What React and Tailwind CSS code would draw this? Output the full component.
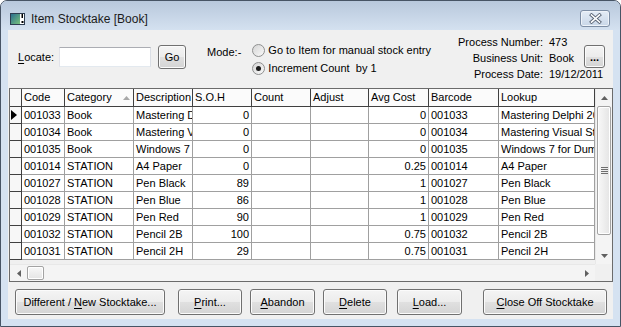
import React from 'react';

const cols = [
  { label: 'Code', w: 'w-[43px]' },
  { label: 'Category', w: 'w-[69px]', sort: true },
  { label: 'Description', w: 'w-[59px]' },
  { label: 'S.O.H', w: 'w-[59px]', right: true },
  { label: 'Count', w: 'w-[59px]' },
  { label: 'Adjust', w: 'w-[58px]' },
  { label: 'Avg Cost', w: 'w-[60px]', right: true },
  { label: 'Barcode', w: 'w-[70px]' },
  { label: 'Lookup', w: 'w-[96px]' },
];

const rows = [
  ['001033', 'Book', 'Mastering Delphi 2005', '0', '', '', '0', '001033', 'Mastering Delphi 2005'],
  ['001034', 'Book', 'Mastering Visual Studio', '0', '', '', '0', '001034', 'Mastering Visual Studio'],
  ['001035', 'Book', 'Windows 7 for Dummies', '0', '', '', '0', '001035', 'Windows 7 for Dummies'],
  ['001014', 'STATION', 'A4 Paper', '0', '', '', '0.25', '001014', 'A4 Paper'],
  ['001027', 'STATION', 'Pen Black', '89', '', '', '1', '001027', 'Pen Black'],
  ['001028', 'STATION', 'Pen Blue', '86', '', '', '1', '001028', 'Pen Blue'],
  ['001029', 'STATION', 'Pen Red', '90', '', '', '1', '001029', 'Pen Red'],
  ['001032', 'STATION', 'Pencil 2B', '100', '', '', '0.75', '001032', 'Pencil 2B'],
  ['001031', 'STATION', 'Pencil 2H', '29', '', '', '0.75', '001031', 'Pencil 2H'],
];

function U({ children }) {
  return <span className="underline underline-offset-[2px] decoration-1">{children}</span>;
}

function Btn({ className = '', children }) {
  return (
    <div
      className={`h-full shrink-0 flex items-center justify-center rounded-[3px] border border-[#707070] bg-[linear-gradient(to_bottom,#f4f4f4_0%,#ececec_50%,#e0e0e0_51%,#d4d4d4_100%)] shadow-[inset_0_0_0_1px_#fbfbfb] whitespace-pre ${className}`}
    >
      {children}
    </div>
  );
}

function Radio({ checked }) {
  return (
    <div className="w-[13px] h-[13px] shrink-0 rounded-full border border-[#8e8f8f] bg-[linear-gradient(135deg,#d4d4d4,#fafafa)] flex items-center justify-center">
      {checked && <div className="w-[5px] h-[5px] rounded-full bg-[#1a1a1a]" />}
    </div>
  );
}

function Arrow({ dir }) {
  const d = {
    up: 'M0 4 L3.5 0 L7 4 Z',
    down: 'M0 0 L3.5 4 L7 0 Z',
  };
  if (dir === 'left' || dir === 'right') {
    return (
      <svg width="4" height="7" viewBox="0 0 4 7">
        <path d={dir === 'left' ? 'M4 0 L0 3.5 L4 7 Z' : 'M0 0 L4 3.5 L0 7 Z'} fill="#606060" />
      </svg>
    );
  }
  return (
    <svg width="7" height="4" viewBox="0 0 7 4">
      <path d={d[dir]} fill="#606060" />
    </svg>
  );
}

function VScroll() {
  return (
    <div className="w-[17px] shrink-0 flex flex-col bg-[#f4f4f4] border-l border-[#e8e8e8]">
      <div className="h-[17px] shrink-0 flex items-center justify-center">
        <Arrow dir="up" />
      </div>
      <div className="h-[129px] shrink-0 mx-[1px] rounded-[2px] border border-[#a3a3a3] bg-[linear-gradient(to_right,#f8f8f8,#e4e4e4)] shadow-[inset_0_0_0_1px_#ffffff] flex items-center justify-center">
        <svg width="7" height="8" viewBox="0 0 7 8">
          <path d="M0 0.5 H7 M0 2.5 H7 M0 4.5 H7 M0 6.5 H7" stroke="#6e6e6e" strokeWidth="1" />
        </svg>
      </div>
      <div className="flex-1" />
      <div className="h-[17px] shrink-0 flex items-center justify-center">
        <Arrow dir="down" />
      </div>
    </div>
  );
}

function HScroll() {
  return (
    <div className="h-[17px] shrink-0 flex">
      <div className="flex-1 flex bg-[#f4f4f4] border-t border-[#e8e8e8]">
        <div className="w-[17px] shrink-0 flex items-center justify-center">
          <Arrow dir="left" />
        </div>
        <div className="w-[17px] shrink-0 my-[1px] rounded-[2px] border border-[#a3a3a3] bg-[linear-gradient(to_bottom,#f8f8f8,#e4e4e4)] shadow-[inset_0_0_0_1px_#ffffff]" />
        <div className="flex-1" />
        <div className="w-[17px] shrink-0 flex items-center justify-center">
          <Arrow dir="right" />
        </div>
      </div>
      <div className="w-[17px] shrink-0 bg-[#f0f0f0]" />
    </div>
  );
}

function Grid() {
  return (
    <div className="ml-[1px] w-[604px] h-[194px] shrink-0 border border-[#6b6b6b] bg-[#f0f0f0] flex flex-col">
      <div className="flex-1 flex min-h-0">
        <div className="flex-1 flex flex-col">
          <div className="flex h-[18px] shrink-0">
            <div className="w-[12px] shrink-0 bg-[#f7f7f7] border-r border-b border-[#404040]" />
            {cols.map((c) => (
              <div
                key={c.label}
                className={`${c.w} shrink-0 bg-[#fbfbfb] border-r border-b border-[#404040] pl-[2px] leading-[17px] whitespace-nowrap overflow-hidden flex items-center`}
              >
                <span>{c.label}</span>
                {c.sort && (
                  <svg className="ml-auto mr-[3px]" width="7" height="4" viewBox="0 0 7 4">
                    <path d="M0 4 L3.5 0 L7 4 Z" fill="#a8a8a8" />
                  </svg>
                )}
              </div>
            ))}
          </div>
          {rows.map((r, i) => (
            <div key={i} className="flex h-[17px] shrink-0">
              <div className="w-[12px] shrink-0 bg-[#f7f7f7] border-r border-b border-[#404040] flex items-center pl-[1px]">
                {i === 0 && (
                  <svg width="6" height="10" viewBox="0 0 6 10">
                    <path d="M0 0 L6 5 L0 10 Z" fill="#000" />
                  </svg>
                )}
              </div>
              {cols.map((c, j) => (
                <div
                  key={j}
                  className={`${c.w} shrink-0 bg-white border-r border-b border-[#a0a0a0] px-[2px] leading-[16px] whitespace-nowrap overflow-hidden ${c.right ? 'text-right' : ''}`}
                >
                  {r[j]}
                </div>
              ))}
            </div>
          ))}
        </div>
        <VScroll />
      </div>
      <HScroll />
    </div>
  );
}

export default function App() {
  return (
    <div className="w-[621px] h-[327px] font-['Liberation_Sans',Arial,sans-serif] text-[11px] leading-[14px] text-black">
      <div className="w-full h-full rounded-t-[7px] border border-[#475465] bg-[#d5e2f1] flex flex-col overflow-hidden">
        <div className="h-[29px] shrink-0 pt-[6px] flex items-center bg-[linear-gradient(to_bottom,#b8c8dc,#d4e1f0)]">
          <svg className="ml-[9px] shrink-0" width="15" height="12" viewBox="0 0 15 12">
            <defs>
              <linearGradient id="tig" x1="0" y1="0" x2="1" y2="1">
                <stop offset="0" stopColor="#2b6f8f" />
                <stop offset="1" stopColor="#79c27a" />
              </linearGradient>
            </defs>
            <rect x="0.5" y="0.5" width="14" height="11" fill="#ffffff" stroke="#2e3d50" />
            <rect x="1" y="1" width="9" height="10" fill="url(#tig)" />
            <rect x="11.5" y="1" width="1.5" height="4" fill="#000" />
            <rect x="11.5" y="8" width="2" height="2" fill="#000" />
          </svg>
          <span className="ml-[6px] text-[12px] text-[#1b1b1b]">Item Stocktake [Book]</span>
          <div className="ml-auto mr-[10px] w-[30px] h-[17px] rounded-[3px] border border-[#7d8ea5] bg-[linear-gradient(to_bottom,#e4ecf6,#c9d7e8)] shadow-[inset_0_0_0_1px_#eef3f9] flex items-center justify-center">
            <svg width="13" height="11" viewBox="0 0 13 11">
              <path d="M2.5 2 L10.5 9 M10.5 2 L2.5 9" stroke="#5b6677" strokeWidth="3.4" strokeLinecap="square" />
              <path d="M2.5 2 L10.5 9 M10.5 2 L2.5 9" stroke="#ffffff" strokeWidth="1.6" strokeLinecap="square" />
            </svg>
          </div>
        </div>

        <div className="flex-1 mx-[7px] mb-[7px] bg-[#f0f0f0] flex flex-col">
          <div className="h-[58px] shrink-0 flex items-start">
            <div className="ml-[10px] mt-[15px] h-[24px] flex items-center">
              <span>
                <U>L</U>ocate:
              </span>
              <div className="ml-[5px] w-[92px] h-[20px] bg-white border border-[#abadb3] border-t-[#abadb3] border-l-[#e2e3ea] border-r-[#dbdfe6] border-b-[#e3e9ef]" />
              <Btn className="ml-[7px] w-[28px] h-[24px]">Go</Btn>
            </div>
            <div className="ml-[21px] mt-[15px]">Mode:-</div>
            <div className="ml-[11px] mt-[11px] flex flex-col">
              <div className="h-[18px] flex items-center">
                <Radio />
                <span className="ml-[3px]">Go to Item for manual stock entry</span>
              </div>
              <div className="h-[18px] flex items-center">
                <Radio checked />
                <span className="ml-[3px] whitespace-pre">Increment Count  by 1</span>
              </div>
            </div>
            <div className="ml-auto mr-[8px] mt-[4px] grid grid-cols-[auto_41px_21px] grid-rows-[16px_16px_16px] items-center">
              <div className="col-start-1 row-start-1 text-right whitespace-nowrap">Process Number:</div>
              <div className="col-start-2 row-start-1 pl-[6px]">473</div>
              <div className="col-start-1 row-start-2 text-right whitespace-nowrap">Business Unit:</div>
              <div className="col-start-2 row-start-2 pl-[6px]">Book</div>
              <div className="col-start-1 row-start-3 text-right whitespace-nowrap">Process Date:</div>
              <div className="col-start-2 col-span-2 row-start-3 pl-[6px] whitespace-nowrap">19/12/2011</div>
              <div className="col-start-3 row-start-1 row-span-2 self-start mt-[11px] h-[23px]">
                <Btn className="w-[21px] font-bold">...</Btn>
              </div>
            </div>
          </div>

          <Grid />

          <div className="mt-[7px] h-[26px] shrink-0 flex pl-[7px]">
            <Btn className="w-[150px]">
              {'Different / '}<U>N</U>{'ew Stocktake...'}
            </Btn>
            <Btn className="ml-[13px] w-[64px]">
              <U>P</U>{'rint...'}
            </Btn>
            <Btn className="ml-[8px] w-[65px]">
              <U>A</U>{'bandon'}
            </Btn>
            <Btn className="ml-[8px] w-[64px]">
              <U>D</U>{'elete'}
            </Btn>
            <Btn className="ml-[10px] w-[65px]">
              <U>L</U>{'oad...'}
            </Btn>
            <Btn className="ml-[21px] w-[124px]">
              <U>C</U>{'lose Off Stocktake'}
            </Btn>
          </div>
        </div>
      </div>
    </div>
  );
}
